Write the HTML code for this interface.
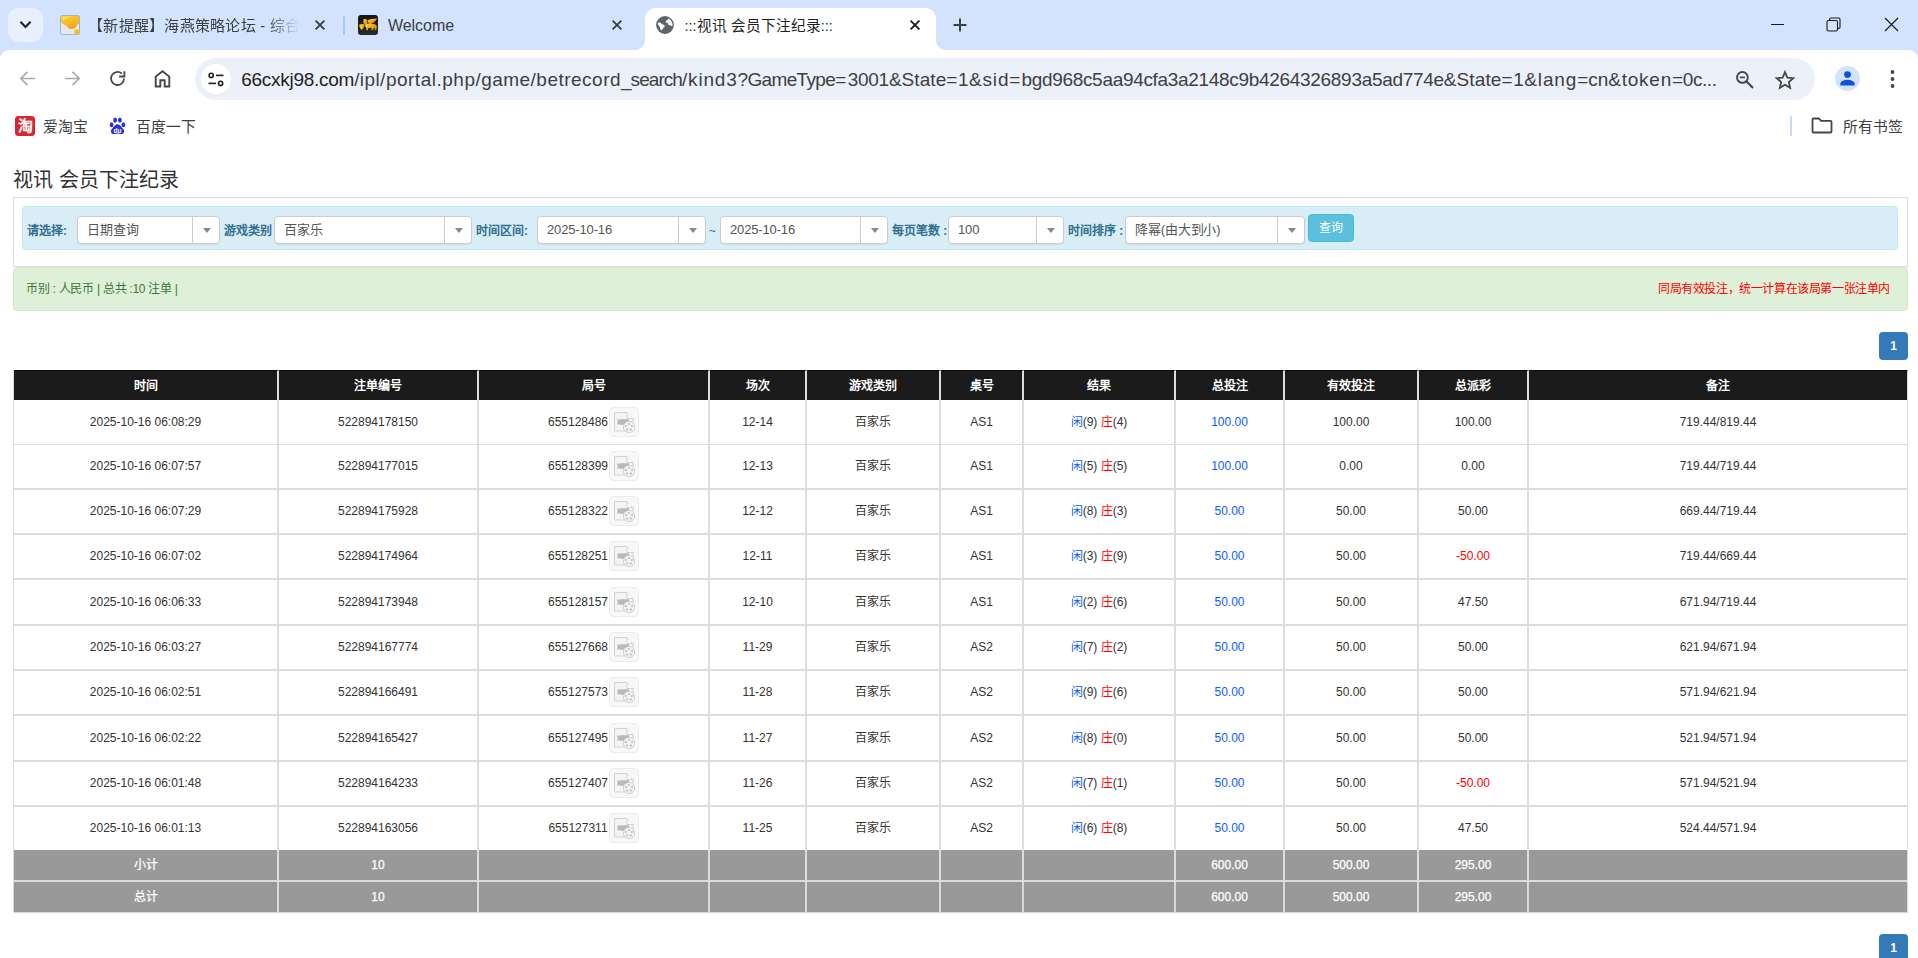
<!DOCTYPE html>
<html lang="zh-CN">
<head>
<meta charset="utf-8">
<title>:::视讯 会员下注纪录:::</title>
<style>
*{box-sizing:border-box}
html,body{margin:0;padding:0}
body{width:1918px;height:958px;overflow:hidden;background:#fff;font-family:"Liberation Sans",sans-serif;font-size:12px;color:#333;position:relative}
.abs{position:absolute}
/* ---------- browser chrome ---------- */
#strip{position:absolute;left:0;top:0;width:1918px;height:58px;background:#d3e3fd}
#toolbar{position:absolute;left:0;top:50px;width:1918px;height:96px;background:#fff;border-radius:9px 9px 0 0}
#tsearch{position:absolute;left:8px;top:8px;width:35px;height:34px;border-radius:11px;background:#e8f0fe}
.tabtxt{position:absolute;top:16px;height:20px;line-height:20px;font-size:14.6px;color:#3c4043;white-space:nowrap;overflow:hidden}
#atab{position:absolute;left:645px;top:8px;width:291px;height:42px;background:#fff;border-radius:11px 11px 0 0}
.curveL{position:absolute;left:635px;top:40px;width:10px;height:10px;background:radial-gradient(circle at 0 0,rgba(255,255,255,0) 9.5px,#fff 10.5px)}
.curveR{position:absolute;left:936px;top:40px;width:10px;height:10px;background:radial-gradient(circle at 100% 0,rgba(255,255,255,0) 9.5px,#fff 10.5px)}
.tsep{position:absolute;top:16px;width:2px;height:19px;background:#a8c7fa;border-radius:1px}
#omni{position:absolute;left:195px;top:58px;width:1620px;height:42px;border-radius:21px;background:#ecf0f9}
#sinfo{position:absolute;left:201px;top:64px;width:30px;height:30px;border-radius:15px;background:#fff}
#url{position:absolute;left:0;top:59px;height:42px;line-height:41px;font-size:19px;color:#1f1f1f;white-space:nowrap}
#url span{position:absolute;top:0;white-space:nowrap}
.bm{position:absolute;top:117px;height:20px;line-height:20px;font-size:14.8px;color:#3c4043;white-space:nowrap}
/* ---------- page ---------- */
#page{position:absolute;left:0;top:146px;width:1918px;height:812px;background:#fff;overflow:hidden}
#title{position:absolute;left:13px;top:21px;font-size:20px;line-height:26px;color:#333;white-space:nowrap}
#outer{position:absolute;left:13px;top:51px;width:1895px;height:70px;border:1px solid #ddd;background:#fff}
#blue{position:absolute;left:22px;top:60px;width:1876px;height:44px;border:1px solid #bce8f1;border-radius:4px;background:#d9edf7}
#green{position:absolute;left:13px;top:121px;width:1895px;height:44px;border:1px solid #d6e9c6;border-radius:4px;background:#dff0d8}
.lbl{position:absolute;top:76.5px;height:16px;line-height:16px;font-size:12px;font-weight:bold;color:#31708f;white-space:nowrap}
.sel{position:absolute;top:70px;height:28px;border:1px solid #ccc;border-radius:4px;background:#fff;box-shadow:0 1px 1px rgba(0,0,0,.06)}
.sel span{position:absolute;left:9px;top:0;line-height:25px;font-size:13px;color:#555;white-space:nowrap;letter-spacing:-0.15px}
.sel i{position:absolute;right:26px;top:0;width:1px;height:26px;background:#ccc}
.sel b{position:absolute;right:8px;top:11px;width:0;height:0;border-left:4.5px solid transparent;border-right:4.5px solid transparent;border-top:5px solid #888}
#btn{position:absolute;left:1308px;top:68px;width:46px;height:28px;border-radius:4px;background:#5bc0de;border:1px solid #46b8da;color:#fff;font-size:12px;line-height:26px;text-align:center}
.pg{position:absolute;left:1879px;width:29px;height:28px;border-radius:4px;background:#337ab7;color:#fff;font-weight:bold;font-size:12px;line-height:28px;text-align:center}
table.tb{position:absolute;left:13px;top:224px;width:1895px;border-collapse:separate;border-spacing:0;table-layout:fixed;border-left:1px solid #ddd}
.tb th{height:30px;padding:0;background:#1b1b1b;color:#fff;font-weight:bold;font-size:12px;text-align:center;border-right:2px solid #ddd;border-top:1px solid #0c0c0c}
.tb td{height:45px;padding:0;text-align:center;vertical-align:middle;font-size:12px;color:#333;border-right:2px solid #ddd;border-bottom:1px solid #ddd;white-space:nowrap}
.tb th:last-child,.tb td:last-child{border-right:1px solid #ddd}
.tb td{line-height:14px}
.tb tr.r0 td{height:45px}
.tb tr.r1 td,.tb tr.r2 td,.tb tr.r3 td,.tb tr.r5 td,.tb tr.r6 td,.tb tr.r8 td{height:45px;border-bottom-width:2px;padding-bottom:1px}
.tb tr.r4 td,.tb tr.r7 td{height:46px;border-bottom-width:2px}
.tb tr.r9 td{height:43px;border-bottom-width:0;padding-bottom:1px}
.cj{position:relative;top:-1.5px}
.cj2{position:relative;top:-0.5px}
.tb tfoot td{height:31px;background:#999;color:#fff;border-bottom:2px solid #ddd;-webkit-text-stroke:0.25px #fff}
.tb tfoot tr.f1 td{height:32px}
.tb tfoot tr.f2 td{height:30px;border-bottom:0;box-shadow:0 1px 1px rgba(0,0,0,.15)}
.bl,.tb td.bl{color:#0a5cff}
.rd,.tb td.rd{color:#f00}
.gn{display:inline-block;vertical-align:middle}
.vb{display:inline-block;vertical-align:middle;width:30px;height:30px;margin-left:1px;border:1px solid #ececec;border-radius:5px;background:#f8f8f8;padding:3px;line-height:0}
</style>
</head>
<body>
<div id="strip"></div>
<div id="toolbar"></div>
<!-- tab search -->
<div id="tsearch"><svg class="abs" style="left:11px;top:13px" width="13" height="9" viewBox="0 0 13 9"><path d="M2.200 1.600L6.500 5.900L10.800 1.600" fill="none" stroke="#1f1f1f" stroke-width="2.1" stroke-linecap="square" stroke-linejoin="miter"/></svg></div>
<!-- tab 1 -->
<svg class="abs" style="left:60px;top:15px" width="20" height="20" viewBox="0 0 20 20"><defs><linearGradient id="yg" x1="0" y1="0" x2="0.6" y2="1"><stop offset="0" stop-color="#fdd633"/><stop offset="1" stop-color="#f4a51d"/></linearGradient></defs><rect x="0.5" y="0.5" width="19" height="19" rx="1.5" fill="#e4e9f0" stroke="#9fb4d8"/><path d="M1 1h18v7c0 1-1 1.5-2 1.5c0 3-3 4.500-5.500 4.500c-3 0-4.500-2-5-3.500c-2-0.500-5.500-2-5.500-4.500z" fill="url(#yg)"/><path d="M3 1.500h9c-5 1-8 3-9 5z" fill="#fde27a" opacity=".7"/><circle cx="16.800" cy="16.800" r="2.600" fill="#f9be1f"/></svg>
<div class="tabtxt" style="left:88px;width:211px;font-size:15px;letter-spacing:0.25px;-webkit-mask-image:linear-gradient(90deg,#000 178px,transparent 211px);mask-image:linear-gradient(90deg,#000 178px,transparent 211px)">【新提醒】海燕策略论坛 - 综合</div>
<svg class="abs" style="left:314px;top:19px" width="12" height="12" viewBox="0 0 12 12"><path d="M1.600 1.600L10.400 10.400M10.400 1.600L1.600 10.400" stroke="#3c4043" stroke-width="1.900"/></svg>
<div class="tsep" style="left:343px"></div>
<!-- tab 2 -->
<svg class="abs" style="left:358px;top:15px" width="20" height="20" viewBox="0 0 20 20"><defs><linearGradient id="lg" x1="0" y1="0" x2="0" y2="1"><stop offset="0" stop-color="#151515"/><stop offset="1" stop-color="#2a2a2a"/></linearGradient><linearGradient id="gd" x1="0" y1="0" x2="1" y2="1"><stop offset="0" stop-color="#ffd23a"/><stop offset="0.55" stop-color="#e9a50d"/><stop offset="1" stop-color="#b97a08"/></linearGradient></defs><rect width="20" height="20" rx="3" fill="url(#lg)"/><path d="M9.300 5.600C11.500 3.700 15.500 3.900 19 3.500C17.800 6.600 14.800 8.600 11.200 9.100z" fill="url(#gd)"/><path d="M5.700 4.100h2.500l1.400 2.900l-0.700 2.400h-2.600l-1-2.600z" fill="url(#gd)"/><path d="M7.300 9.100C10 8.100 14 8.500 17.400 9.500C19 10.400 19.100 12 18.600 13.100L18.400 15.200h-1.400l-0.300-1.900h-1.300l-0.400 1.900h-1.600l0.200-2.100L10.300 13l-0.500 2.200H8.200l0.200-2.400l-1.200-1.500z" fill="url(#gd)"/><path d="M1.200 9.800C3 8.600 5.600 8.800 6.700 9.600C6.600 12 5.100 14.300 3.300 15.100C2 13.600 1.300 11.600 1.200 9.800z" fill="url(#gd)"/><circle cx="8.600" cy="11.200" r="1" fill="#ffe680"/><circle cx="3.600" cy="12.300" r="0.900" fill="#ffe27a"/></svg>
<div class="tabtxt" style="left:388px;font-size:16px;letter-spacing:-0.05px">Welcome</div>
<svg class="abs" style="left:611px;top:19px" width="12" height="12" viewBox="0 0 12 12"><path d="M1.600 1.600L10.400 10.400M10.400 1.600L1.600 10.400" stroke="#3c4043" stroke-width="1.900"/></svg>
<!-- active tab -->
<div id="atab"></div><div class="curveL"></div><div class="curveR"></div>
<svg class="abs" style="left:656px;top:16px" width="18" height="18" viewBox="0 0 18 18"><circle cx="9" cy="9" r="8.900" fill="#5f6368"/><path d="M2.400 6.500c1.200-0.300 2.400 0.200 3.200 1.200c0.700 0.900 1.800 0.700 2.600 1.300c1 0.800 0.300 2.200-0.700 2.700c-0.800 0.400-0.900 1.300-1.300 2c-0.500 0.900-1.500 0.300-1.800-0.500c-0.400-1-0.300-2.100-1-3c-0.600-0.800-1.500-1.300-1.600-2.400c0-0.500 0.200-1 0.600-1.300z" fill="#fff"/><path d="M8.200 1.600c1.300-0.200 2.700 0 3.900 0.600c0.300 0.900-0.300 1.700-1.100 2c-0.900 0.300-1.400 1-1.200 1.900c0.200 0.800 1.200 0.600 1.800 1c0.700 0.500 0.500 1.500 1.200 2c0.800 0.600 1.900 0.300 2.700 0.800c0.300 0.200 0.500 0.400 0.700 0.700l0.400-1.600c0-2.600-1.400-5-3.600-6.300c-1.500-0.800-3.200-1.200-4.800-1.100z" fill="#fff"/></svg>
<div class="tabtxt" style="left:684.5px;color:#1f1f1f;font-size:14.6px">:::视讯 会员下注纪录:::</div>
<svg class="abs" style="left:909px;top:19px" width="12" height="12" viewBox="0 0 12 12"><path d="M1.600 1.600L10.400 10.400M10.400 1.600L1.600 10.400" stroke="#1f1f1f" stroke-width="1.900"/></svg>
<svg class="abs" style="left:953px;top:18px" width="14" height="14" viewBox="0 0 14 14"><path d="M7 0.500v13M0.500 7h13" stroke="#3c4043" stroke-width="2"/></svg>
<!-- window controls -->
<svg class="abs" style="left:1771px;top:24px" width="13" height="1" viewBox="0 0 13 1"><rect width="13" height="1" fill="#1b1b1b"/></svg>
<svg class="abs" style="left:1826px;top:17px" width="15" height="15" viewBox="0 0 15 15"><rect x="1" y="3.500" width="10.500" height="10.500" rx="1.500" fill="none" stroke="#1b1b1b" stroke-width="1.100"/><path d="M3.600 3.500v-1.100c0-0.900 0.600-1.400 1.400-1.400h7.600c0.900 0 1.400 0.600 1.400 1.400v7.600c0 0.900-0.600 1.400-1.400 1.400h-1.100" fill="none" stroke="#1b1b1b" stroke-width="1.100"/></svg>
<svg class="abs" style="left:1884px;top:17px" width="15" height="15" viewBox="0 0 15 15"><path d="M1 1L14 14M14 1L1 14" stroke="#1b1b1b" stroke-width="1.200"/></svg>
<!-- nav buttons -->
<svg class="abs" style="left:19px;top:70px" width="17" height="17" viewBox="0 0 17 17"><path d="M16 8.500H2.500M8.500 1.800L1.800 8.500L8.500 15.200" fill="none" stroke="#ababab" stroke-width="1.700"/></svg>
<svg class="abs" style="left:64px;top:70px" width="17" height="17" viewBox="0 0 17 17"><path d="M1 8.500H14.500M8.500 1.800L15.200 8.500L8.500 15.200" fill="none" stroke="#ababab" stroke-width="1.700"/></svg>
<svg class="abs" style="left:109px;top:70px" width="17" height="17" viewBox="0 0 17 17"><path d="M15 8.500a6.500 6.500 0 1 1-2.200-4.900" fill="none" stroke="#444746" stroke-width="1.800"/><path d="M15.400 1.200v5.300h-5.300" fill="none" stroke="#444746" stroke-width="1.800"/></svg>
<svg class="abs" style="left:154px;top:69px" width="17" height="19" viewBox="0 0 17 19"><path d="M1.700 17.500V7.600L8.500 2.200L15.300 7.600V17.500H10.700V11.300H6.300V17.500z" fill="none" stroke="#444746" stroke-width="1.900" stroke-linejoin="miter"/></svg>
<!-- omnibox -->
<div id="omni"></div><div id="sinfo"></div>
<svg class="abs" style="left:208px;top:72px" width="16" height="15" viewBox="0 0 16 15"><circle cx="3.200" cy="3.400" r="2.100" fill="none" stroke="#1f1f1f" stroke-width="1.600"/><path d="M8 3.400h7.500" stroke="#1f1f1f" stroke-width="1.600"/><circle cx="12.600" cy="11.400" r="2.100" fill="none" stroke="#1f1f1f" stroke-width="1.600"/><path d="M0.500 11.400h7.500" stroke="#1f1f1f" stroke-width="1.600"/></svg>
<div id="url"><span style="left:241.2px;letter-spacing:-0.264px">66cxkj98.com</span><span style="left:354.2px;letter-spacing:0.401px;color:#3c4043">/ipl</span><span style="left:380.1px;letter-spacing:0.509px;color:#3c4043">/portal.php</span><span style="left:475.5px;letter-spacing:0.457px;color:#3c4043">/game</span><span style="left:530.6px;letter-spacing:0.485px;color:#3c4043">/betrecord</span><span style="left:621.0px;letter-spacing:-0.944px;color:#3c4043">_search</span><span style="left:682.0px;letter-spacing:0.799px;color:#3c4043">/kind3</span><span style="left:737.5px;letter-spacing:-0.644px;color:#3c4043">?GameType</span><span style="left:835.2px;letter-spacing:1.391px;color:#3c4043">=</span><span style="left:847.7px;letter-spacing:-0.270px;color:#3c4043">3001</span><span style="left:888.9px;letter-spacing:0.059px;color:#3c4043">&amp;State</span><span style="left:946.3px;letter-spacing:0.514px;color:#3c4043">=1</span><span style="left:969.0px;letter-spacing:0.833px;color:#3c4043">&amp;sid</span><span style="left:1009.3px;letter-spacing:0.991px;color:#3c4043">=</span><span style="left:1021.4px;letter-spacing:-0.310px;color:#3c4043">bgd968c5aa94cfa3a2148c9b4264326893a5ad774e</span><span style="left:1443.7px;letter-spacing:0.142px;color:#3c4043">&amp;State</span><span style="left:1501.6px;letter-spacing:0.514px;color:#3c4043">=1</span><span style="left:1524.3px;letter-spacing:0.858px;color:#3c4043">&amp;lang</span><span style="left:1577.2px;letter-spacing:-0.057px;color:#3c4043">=cn</span><span style="left:1608.2px;letter-spacing:0.791px;color:#3c4043">&amp;token</span><span style="left:1672.1px;letter-spacing:-0.417px;color:#3c4043">=0c...</span></div>
<svg class="abs" style="left:1735px;top:70px" width="20" height="20" viewBox="0 0 20 20"><circle cx="7.400" cy="7.400" r="5.400" fill="none" stroke="#444746" stroke-width="1.900"/><path d="M11.500 11.500L18 18" stroke="#444746" stroke-width="2.100"/><path d="M4.800 7.400h5.200" stroke="#444746" stroke-width="1.700"/></svg>
<svg class="abs" style="left:1774px;top:69px" width="22" height="21" viewBox="0 0 22 21"><path d="M11 3.100l2.350 5.500l5.950 0.500l-4.500 3.900l1.350 5.800l-5.150-3.100l-5.150 3.100l1.350-5.800l-4.500-3.900l5.950-0.500z" fill="none" stroke="#444746" stroke-width="1.800" stroke-linejoin="miter"/></svg>
<div class="abs" style="left:1835px;top:66px;width:25px;height:25px;border-radius:13px;background:#d3e3fd"></div>
<svg class="abs" style="left:1839px;top:70px" width="17" height="17" viewBox="0 0 17 17"><circle cx="8.500" cy="4.600" r="3.400" fill="#0b57d0"/><path d="M1.300 15.500v-1.800c0-2.600 4.800-3.900 7.200-3.900s7.200 1.300 7.200 3.900v1.800z" fill="#0b57d0"/></svg>
<svg class="abs" style="left:1890px;top:69px" width="5" height="20" viewBox="0 0 5 20"><circle cx="2.500" cy="3" r="1.900" fill="#444746"/><circle cx="2.500" cy="10" r="1.900" fill="#444746"/><circle cx="2.500" cy="17" r="1.900" fill="#444746"/></svg>
<!-- bookmarks bar -->
<div class="abs" style="left:15px;top:116px;width:20px;height:20px;border-radius:3.500px;background:#dc2431;color:#fff;font-size:15px;line-height:20px;text-align:center;font-weight:bold;overflow:hidden">淘</div>
<div class="bm" style="left:43px">爱淘宝</div>
<svg class="abs" style="left:109px;top:117px" width="17" height="18" viewBox="0 0 17 18"><ellipse cx="2.600" cy="7.700" rx="1.900" ry="2.500" fill="#2932e1"/><ellipse cx="6.100" cy="3.100" rx="1.900" ry="2.600" fill="#2932e1"/><ellipse cx="10.900" cy="3.100" rx="1.900" ry="2.600" fill="#2932e1"/><ellipse cx="14.400" cy="7.700" rx="1.900" ry="2.500" fill="#2932e1"/><path d="M8.500 7.300c2.200 0 3.200 2 4.800 3.600c1.300 1.300 2.100 2.300 1.700 4c-0.400 1.700-2 2.300-3.500 2.100c-1.200-0.200-1.800-0.400-3-0.400s-1.800 0.200-3 0.400c-1.500 0.200-3.100-0.400-3.500-2.100c-0.400-1.700 0.400-2.700 1.700-4c1.600-1.600 2.600-3.600 4.800-3.600z" fill="#2932e1"/><text x="8.500" y="15.600" font-size="6.500" font-weight="bold" text-anchor="middle" fill="#fff" font-family="Liberation Sans, sans-serif">du</text></svg>
<div class="bm" style="left:136px">百度一下</div>
<div class="abs" style="left:1790px;top:116px;width:2px;height:20px;background:#c7d9f7;border-radius:1px"></div>
<svg class="abs" style="left:1811px;top:117px" width="22" height="17" viewBox="0 0 22 17"><path d="M2.500 1.500h5.500l2 2.300h9.500c0.600 0 1 0.400 1 1v9.700c0 0.600-0.400 1-1 1h-17c-0.600 0-1-0.400-1-1v-12c0-0.600 0.400-1 1-1z" fill="none" stroke="#444746" stroke-width="1.800" stroke-linejoin="round"/></svg>
<div class="bm" style="left:1843px">所有书签</div>
<!-- page -->
<div id="page">
<div id="title">视讯 会员下注纪录</div>
<div id="outer"></div>
<div id="blue"></div>
<div class="lbl" style="left:27px">请选择:</div>
<div class="sel" style="left:77px;width:143px"><span>日期查询</span><i></i><b></b></div>
<div class="lbl" style="left:224px">游戏类别</div>
<div class="sel" style="left:274px;width:198px"><span>百家乐</span><i></i><b></b></div>
<div class="lbl" style="left:476px">时间区间:</div>
<div class="sel" style="left:537px;width:169px"><span>2025-10-16</span><i></i><b></b></div>
<div class="lbl" style="left:709px;font-weight:normal">~</div>
<div class="sel" style="left:720px;width:168px"><span>2025-10-16</span><i></i><b></b></div>
<div class="lbl" style="left:892px">每页笔数 :</div>
<div class="sel" style="left:948px;width:116px"><span>100</span><i></i><b></b></div>
<div class="lbl" style="left:1068px">时间排序 :</div>
<div class="sel" style="left:1125px;width:180px"><span>降幂(由大到小)</span><i></i><b></b></div>
<div id="btn">查询</div>
<div id="green"></div>
<div class="abs" style="left:26px;top:135px;line-height:17px;font-size:12px;letter-spacing:-0.27px;color:#3c763d;white-space:nowrap">币别 : 人民币 | 总共 :10 注单 |</div>
<div class="abs" style="right:28px;top:135px;line-height:17px;font-size:12px;letter-spacing:-0.4px;color:#f00;white-space:nowrap">同局有效投注，统一计算在该局第一张注单内</div>
<div class="pg" style="top:186px">1</div>
<table class="tb"><colgroup><col style="width:265px"><col style="width:200px"><col style="width:231px"><col style="width:97px"><col style="width:134px"><col style="width:83px"><col style="width:152px"><col style="width:109px"><col style="width:134px"><col style="width:110px"><col style="width:379px"></colgroup>
<thead><tr><th><span class="cj">时间</span></th><th><span class="cj">注单编号</span></th><th><span class="cj">局号</span></th><th><span class="cj">场次</span></th><th><span class="cj">游戏类别</span></th><th><span class="cj">桌号</span></th><th><span class="cj">结果</span></th><th><span class="cj">总投注</span></th><th><span class="cj">有效投注</span></th><th><span class="cj">总派彩</span></th><th><span class="cj">备注</span></th></tr></thead><tbody>
<tr class="r0"><td>2025-10-16 06:08:29</td><td>522894178150</td><td><span class="gn">655128486</span><span class="vb"><svg width="22" height="22" viewBox="0 0 22 22"><path d="M1.5 1.5h12.5l6 6v12.5h-18.5z" fill="#f4f4f4" stroke="#d2d2d2" stroke-width="1"/><path d="M14 1.5v6h6" fill="#fafafa" stroke="#d2d2d2" stroke-width="1"/><path d="M4.5 8l2 1.2V8.3h9.5v5.4H6.5v-0.9l-2 1.2z" fill="#b9b9b9"/><circle cx="16" cy="16" r="5.6" fill="#f6f6f6" stroke="#cfcfcf" stroke-width="1"/><circle cx="16" cy="12.9" r="1.2" fill="#c8c8c8"/><circle cx="13" cy="15" r="1.2" fill="#c8c8c8"/><circle cx="19" cy="15" r="1.2" fill="#c8c8c8"/><circle cx="14.2" cy="18.5" r="1.2" fill="#c8c8c8"/><circle cx="17.8" cy="18.5" r="1.2" fill="#c8c8c8"/></svg></span></td><td>12-14</td><td>百家乐</td><td>AS1</td><td><span class="bl cj2">闲</span>(9) <span class="rd cj2">庄</span>(4)</td><td class="bl">100.00</td><td>100.00</td><td>100.00</td><td>719.44/819.44</td></tr>
<tr class="r1"><td>2025-10-16 06:07:57</td><td>522894177015</td><td><span class="gn">655128399</span><span class="vb"><svg width="22" height="22" viewBox="0 0 22 22"><path d="M1.5 1.5h12.5l6 6v12.5h-18.5z" fill="#f4f4f4" stroke="#d2d2d2" stroke-width="1"/><path d="M14 1.5v6h6" fill="#fafafa" stroke="#d2d2d2" stroke-width="1"/><path d="M4.5 8l2 1.2V8.3h9.5v5.4H6.5v-0.9l-2 1.2z" fill="#b9b9b9"/><circle cx="16" cy="16" r="5.6" fill="#f6f6f6" stroke="#cfcfcf" stroke-width="1"/><circle cx="16" cy="12.9" r="1.2" fill="#c8c8c8"/><circle cx="13" cy="15" r="1.2" fill="#c8c8c8"/><circle cx="19" cy="15" r="1.2" fill="#c8c8c8"/><circle cx="14.2" cy="18.5" r="1.2" fill="#c8c8c8"/><circle cx="17.8" cy="18.5" r="1.2" fill="#c8c8c8"/></svg></span></td><td>12-13</td><td>百家乐</td><td>AS1</td><td><span class="bl cj2">闲</span>(5) <span class="rd cj2">庄</span>(5)</td><td class="bl">100.00</td><td>0.00</td><td>0.00</td><td>719.44/719.44</td></tr>
<tr class="r2"><td>2025-10-16 06:07:29</td><td>522894175928</td><td><span class="gn">655128322</span><span class="vb"><svg width="22" height="22" viewBox="0 0 22 22"><path d="M1.5 1.5h12.5l6 6v12.5h-18.5z" fill="#f4f4f4" stroke="#d2d2d2" stroke-width="1"/><path d="M14 1.5v6h6" fill="#fafafa" stroke="#d2d2d2" stroke-width="1"/><path d="M4.5 8l2 1.2V8.3h9.5v5.4H6.5v-0.9l-2 1.2z" fill="#b9b9b9"/><circle cx="16" cy="16" r="5.6" fill="#f6f6f6" stroke="#cfcfcf" stroke-width="1"/><circle cx="16" cy="12.9" r="1.2" fill="#c8c8c8"/><circle cx="13" cy="15" r="1.2" fill="#c8c8c8"/><circle cx="19" cy="15" r="1.2" fill="#c8c8c8"/><circle cx="14.2" cy="18.5" r="1.2" fill="#c8c8c8"/><circle cx="17.8" cy="18.5" r="1.2" fill="#c8c8c8"/></svg></span></td><td>12-12</td><td>百家乐</td><td>AS1</td><td><span class="bl cj2">闲</span>(8) <span class="rd cj2">庄</span>(3)</td><td class="bl">50.00</td><td>50.00</td><td>50.00</td><td>669.44/719.44</td></tr>
<tr class="r3"><td>2025-10-16 06:07:02</td><td>522894174964</td><td><span class="gn">655128251</span><span class="vb"><svg width="22" height="22" viewBox="0 0 22 22"><path d="M1.5 1.5h12.5l6 6v12.5h-18.5z" fill="#f4f4f4" stroke="#d2d2d2" stroke-width="1"/><path d="M14 1.5v6h6" fill="#fafafa" stroke="#d2d2d2" stroke-width="1"/><path d="M4.5 8l2 1.2V8.3h9.5v5.4H6.5v-0.9l-2 1.2z" fill="#b9b9b9"/><circle cx="16" cy="16" r="5.6" fill="#f6f6f6" stroke="#cfcfcf" stroke-width="1"/><circle cx="16" cy="12.9" r="1.2" fill="#c8c8c8"/><circle cx="13" cy="15" r="1.2" fill="#c8c8c8"/><circle cx="19" cy="15" r="1.2" fill="#c8c8c8"/><circle cx="14.2" cy="18.5" r="1.2" fill="#c8c8c8"/><circle cx="17.8" cy="18.5" r="1.2" fill="#c8c8c8"/></svg></span></td><td>12-11</td><td>百家乐</td><td>AS1</td><td><span class="bl cj2">闲</span>(3) <span class="rd cj2">庄</span>(9)</td><td class="bl">50.00</td><td>50.00</td><td class="rd">-50.00</td><td>719.44/669.44</td></tr>
<tr class="r4"><td>2025-10-16 06:06:33</td><td>522894173948</td><td><span class="gn">655128157</span><span class="vb"><svg width="22" height="22" viewBox="0 0 22 22"><path d="M1.5 1.5h12.5l6 6v12.5h-18.5z" fill="#f4f4f4" stroke="#d2d2d2" stroke-width="1"/><path d="M14 1.5v6h6" fill="#fafafa" stroke="#d2d2d2" stroke-width="1"/><path d="M4.5 8l2 1.2V8.3h9.5v5.4H6.5v-0.9l-2 1.2z" fill="#b9b9b9"/><circle cx="16" cy="16" r="5.6" fill="#f6f6f6" stroke="#cfcfcf" stroke-width="1"/><circle cx="16" cy="12.9" r="1.2" fill="#c8c8c8"/><circle cx="13" cy="15" r="1.2" fill="#c8c8c8"/><circle cx="19" cy="15" r="1.2" fill="#c8c8c8"/><circle cx="14.2" cy="18.5" r="1.2" fill="#c8c8c8"/><circle cx="17.8" cy="18.5" r="1.2" fill="#c8c8c8"/></svg></span></td><td>12-10</td><td>百家乐</td><td>AS1</td><td><span class="bl cj2">闲</span>(2) <span class="rd cj2">庄</span>(6)</td><td class="bl">50.00</td><td>50.00</td><td>47.50</td><td>671.94/719.44</td></tr>
<tr class="r5"><td>2025-10-16 06:03:27</td><td>522894167774</td><td><span class="gn">655127668</span><span class="vb"><svg width="22" height="22" viewBox="0 0 22 22"><path d="M1.5 1.5h12.5l6 6v12.5h-18.5z" fill="#f4f4f4" stroke="#d2d2d2" stroke-width="1"/><path d="M14 1.5v6h6" fill="#fafafa" stroke="#d2d2d2" stroke-width="1"/><path d="M4.5 8l2 1.2V8.3h9.5v5.4H6.5v-0.9l-2 1.2z" fill="#b9b9b9"/><circle cx="16" cy="16" r="5.6" fill="#f6f6f6" stroke="#cfcfcf" stroke-width="1"/><circle cx="16" cy="12.9" r="1.2" fill="#c8c8c8"/><circle cx="13" cy="15" r="1.2" fill="#c8c8c8"/><circle cx="19" cy="15" r="1.2" fill="#c8c8c8"/><circle cx="14.2" cy="18.5" r="1.2" fill="#c8c8c8"/><circle cx="17.8" cy="18.5" r="1.2" fill="#c8c8c8"/></svg></span></td><td>11-29</td><td>百家乐</td><td>AS2</td><td><span class="bl cj2">闲</span>(7) <span class="rd cj2">庄</span>(2)</td><td class="bl">50.00</td><td>50.00</td><td>50.00</td><td>621.94/671.94</td></tr>
<tr class="r6"><td>2025-10-16 06:02:51</td><td>522894166491</td><td><span class="gn">655127573</span><span class="vb"><svg width="22" height="22" viewBox="0 0 22 22"><path d="M1.5 1.5h12.5l6 6v12.5h-18.5z" fill="#f4f4f4" stroke="#d2d2d2" stroke-width="1"/><path d="M14 1.5v6h6" fill="#fafafa" stroke="#d2d2d2" stroke-width="1"/><path d="M4.5 8l2 1.2V8.3h9.5v5.4H6.5v-0.9l-2 1.2z" fill="#b9b9b9"/><circle cx="16" cy="16" r="5.6" fill="#f6f6f6" stroke="#cfcfcf" stroke-width="1"/><circle cx="16" cy="12.9" r="1.2" fill="#c8c8c8"/><circle cx="13" cy="15" r="1.2" fill="#c8c8c8"/><circle cx="19" cy="15" r="1.2" fill="#c8c8c8"/><circle cx="14.2" cy="18.5" r="1.2" fill="#c8c8c8"/><circle cx="17.8" cy="18.5" r="1.2" fill="#c8c8c8"/></svg></span></td><td>11-28</td><td>百家乐</td><td>AS2</td><td><span class="bl cj2">闲</span>(9) <span class="rd cj2">庄</span>(6)</td><td class="bl">50.00</td><td>50.00</td><td>50.00</td><td>571.94/621.94</td></tr>
<tr class="r7"><td>2025-10-16 06:02:22</td><td>522894165427</td><td><span class="gn">655127495</span><span class="vb"><svg width="22" height="22" viewBox="0 0 22 22"><path d="M1.5 1.5h12.5l6 6v12.5h-18.5z" fill="#f4f4f4" stroke="#d2d2d2" stroke-width="1"/><path d="M14 1.5v6h6" fill="#fafafa" stroke="#d2d2d2" stroke-width="1"/><path d="M4.5 8l2 1.2V8.3h9.5v5.4H6.5v-0.9l-2 1.2z" fill="#b9b9b9"/><circle cx="16" cy="16" r="5.6" fill="#f6f6f6" stroke="#cfcfcf" stroke-width="1"/><circle cx="16" cy="12.9" r="1.2" fill="#c8c8c8"/><circle cx="13" cy="15" r="1.2" fill="#c8c8c8"/><circle cx="19" cy="15" r="1.2" fill="#c8c8c8"/><circle cx="14.2" cy="18.5" r="1.2" fill="#c8c8c8"/><circle cx="17.8" cy="18.5" r="1.2" fill="#c8c8c8"/></svg></span></td><td>11-27</td><td>百家乐</td><td>AS2</td><td><span class="bl cj2">闲</span>(8) <span class="rd cj2">庄</span>(0)</td><td class="bl">50.00</td><td>50.00</td><td>50.00</td><td>521.94/571.94</td></tr>
<tr class="r8"><td>2025-10-16 06:01:48</td><td>522894164233</td><td><span class="gn">655127407</span><span class="vb"><svg width="22" height="22" viewBox="0 0 22 22"><path d="M1.5 1.5h12.5l6 6v12.5h-18.5z" fill="#f4f4f4" stroke="#d2d2d2" stroke-width="1"/><path d="M14 1.5v6h6" fill="#fafafa" stroke="#d2d2d2" stroke-width="1"/><path d="M4.5 8l2 1.2V8.3h9.5v5.4H6.5v-0.9l-2 1.2z" fill="#b9b9b9"/><circle cx="16" cy="16" r="5.6" fill="#f6f6f6" stroke="#cfcfcf" stroke-width="1"/><circle cx="16" cy="12.9" r="1.2" fill="#c8c8c8"/><circle cx="13" cy="15" r="1.2" fill="#c8c8c8"/><circle cx="19" cy="15" r="1.2" fill="#c8c8c8"/><circle cx="14.2" cy="18.5" r="1.2" fill="#c8c8c8"/><circle cx="17.8" cy="18.5" r="1.2" fill="#c8c8c8"/></svg></span></td><td>11-26</td><td>百家乐</td><td>AS2</td><td><span class="bl cj2">闲</span>(7) <span class="rd cj2">庄</span>(1)</td><td class="bl">50.00</td><td>50.00</td><td class="rd">-50.00</td><td>571.94/521.94</td></tr>
<tr class="r9"><td>2025-10-16 06:01:13</td><td>522894163056</td><td><span class="gn">655127311</span><span class="vb"><svg width="22" height="22" viewBox="0 0 22 22"><path d="M1.5 1.5h12.5l6 6v12.5h-18.5z" fill="#f4f4f4" stroke="#d2d2d2" stroke-width="1"/><path d="M14 1.5v6h6" fill="#fafafa" stroke="#d2d2d2" stroke-width="1"/><path d="M4.5 8l2 1.2V8.3h9.5v5.4H6.5v-0.9l-2 1.2z" fill="#b9b9b9"/><circle cx="16" cy="16" r="5.6" fill="#f6f6f6" stroke="#cfcfcf" stroke-width="1"/><circle cx="16" cy="12.9" r="1.2" fill="#c8c8c8"/><circle cx="13" cy="15" r="1.2" fill="#c8c8c8"/><circle cx="19" cy="15" r="1.2" fill="#c8c8c8"/><circle cx="14.2" cy="18.5" r="1.2" fill="#c8c8c8"/><circle cx="17.8" cy="18.5" r="1.2" fill="#c8c8c8"/></svg></span></td><td>11-25</td><td>百家乐</td><td>AS2</td><td><span class="bl cj2">闲</span>(6) <span class="rd cj2">庄</span>(8)</td><td class="bl">50.00</td><td>50.00</td><td>47.50</td><td>524.44/571.94</td></tr>
</tbody><tfoot>
<tr class="f1"><td>小计</td><td>10</td><td></td><td></td><td></td><td></td><td></td><td>600.00</td><td>500.00</td><td>295.00</td><td></td></tr>
<tr class="f2"><td>总计</td><td>10</td><td></td><td></td><td></td><td></td><td></td><td>600.00</td><td>500.00</td><td>295.00</td><td></td></tr>
</tfoot></table>
<div class="pg" style="top:788px">1</div>
</div>
</body>
</html>
